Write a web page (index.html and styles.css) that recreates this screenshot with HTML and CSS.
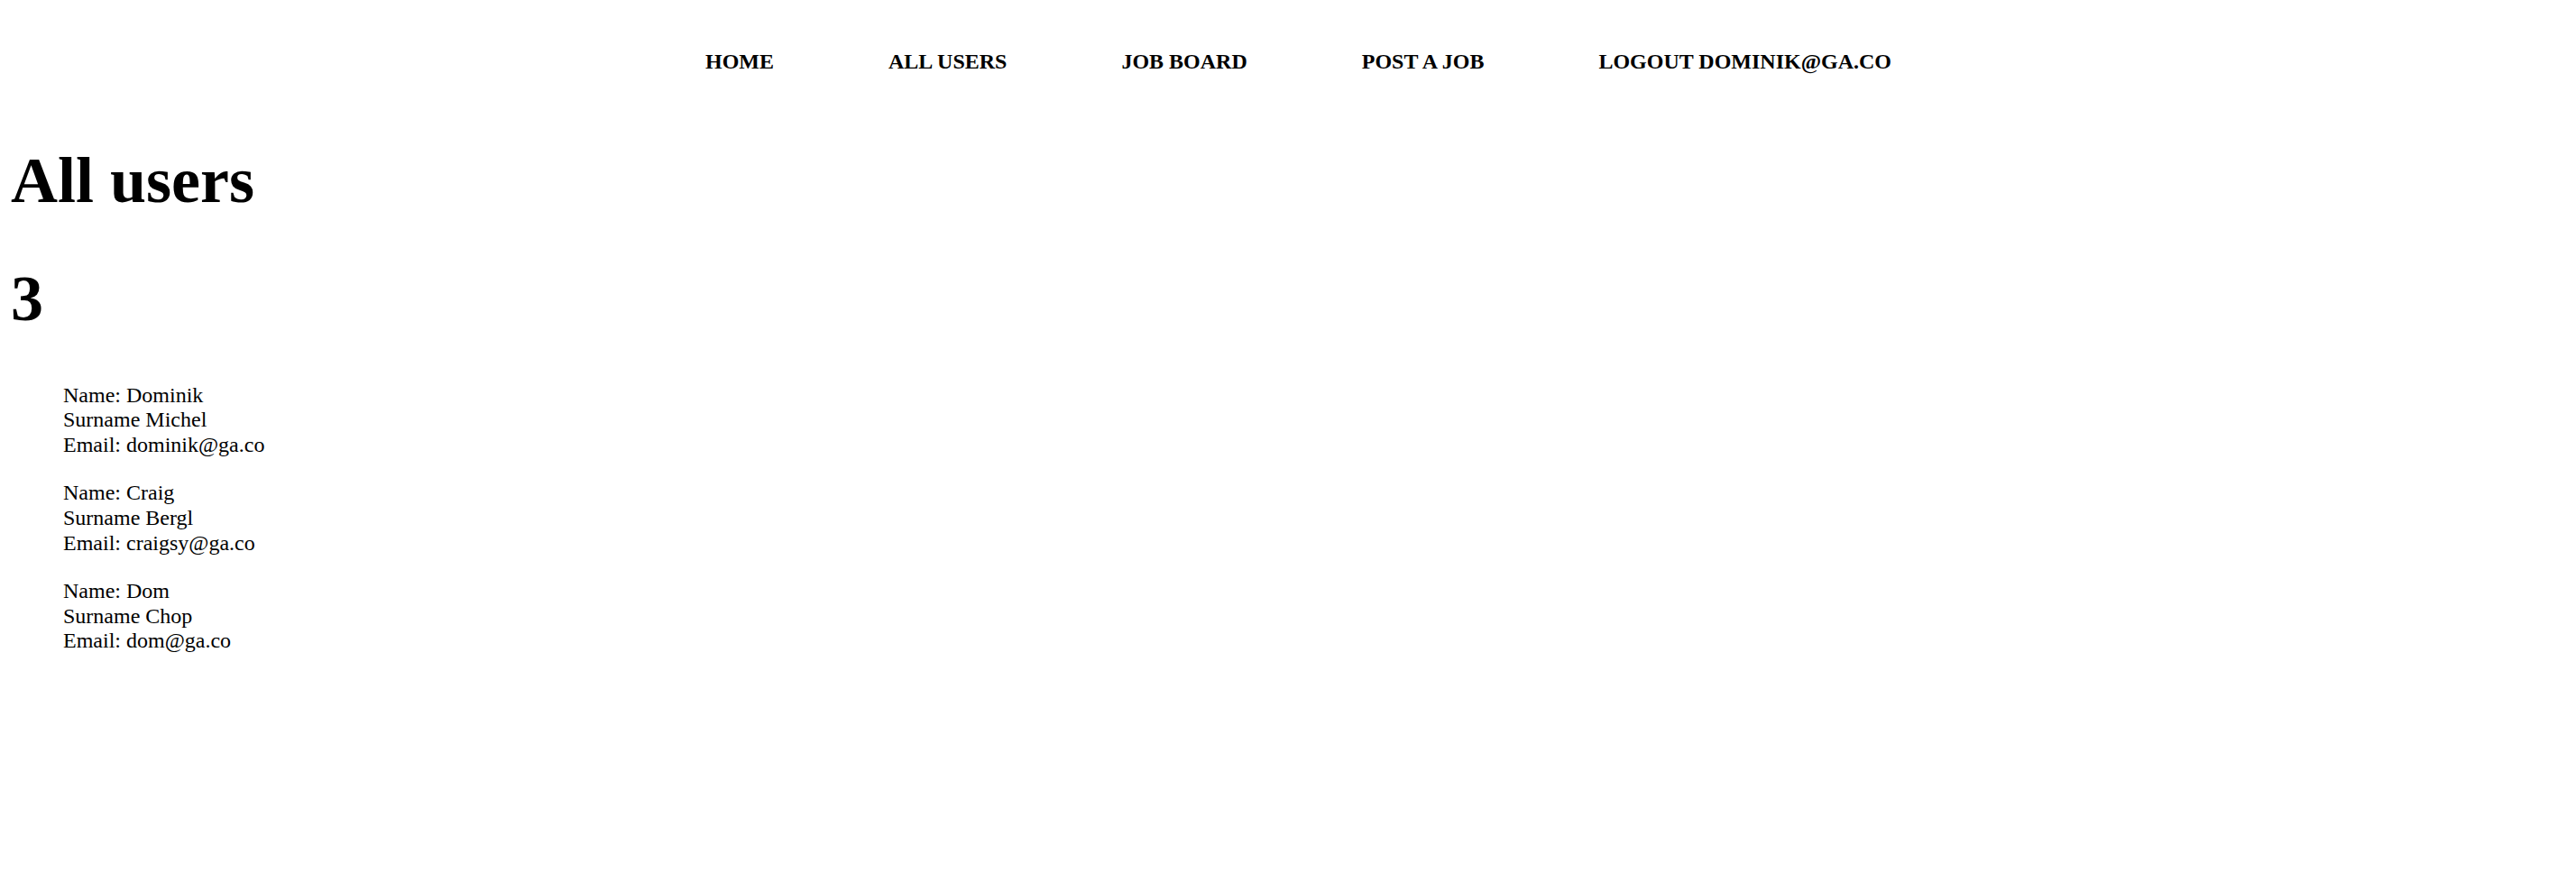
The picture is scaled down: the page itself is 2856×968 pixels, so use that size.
FILE: index.html
```html
<!DOCTYPE html>
<html>
<head>
<meta charset="utf-8">
<link rel="stylesheet" href="styles.css">
</head>
<body>
<nav class="nav">
  <a class="nav-link" href="#">HOME</a>
  <a class="nav-link" href="#">ALL USERS</a>
  <a class="nav-link" href="#">JOB BOARD</a>
  <a class="nav-link" href="#">POST A JOB</a>
  <a class="nav-link" href="#">LOGOUT DOMINIK@GA.CO</a>
</nav>
<h1 class="title">All users</h1>
<h1 class="count">3</h1>
<ul class="users">
  <li class="user">
    <div>Name: Dominik</div>
    <div>Surname Michel</div>
    <div>Email: dominik@ga.co</div>
  </li>
  <li class="user">
    <div>Name: Craig</div>
    <div>Surname Bergl</div>
    <div>Email: craigsy@ga.co</div>
  </li>
  <li class="user">
    <div>Name: Dom</div>
    <div>Surname Chop</div>
    <div>Email: dom@ga.co</div>
  </li>
</ul>
</body>
</html>
```
FILE: styles.css
```css
html, body {
  background: #fff;
}
body {
  margin: 12px;
  font-family: "Liberation Serif", "Times New Roman", serif;
  font-size: 24px;
  color: #000;
}
.nav {
  display: flex;
  justify-content: center;
  gap: 127px;
  padding: 43px 0 29px 23px;
}
.nav-link {
  font-weight: bold;
  color: #000;
  text-decoration: none;
}
.title, .count {
  font-size: 72px;
  font-weight: bold;
  margin: 48px 0;
}
.users {
  list-style: none;
  margin: 51.5px 0 0;
  padding: 0 0 0 58px;
  display: flex;
  flex-direction: column;
  gap: 25.7px;
  line-height: 27.67px;
}
```
